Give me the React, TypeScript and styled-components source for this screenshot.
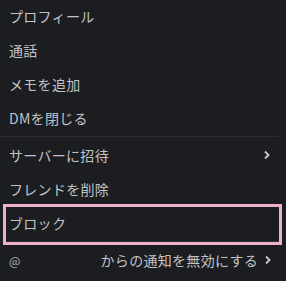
import styled, { createGlobalStyle } from "styled-components";

const Global = createGlobalStyle`
  html, body {
    margin: 0;
    padding: 0;
    background: #1c1d21;
  }
  body {
    font-family: "Noto Sans CJK JP", "Noto Sans", sans-serif;
  }
`;

const Menu = styled.div`
  width: 286px;
  height: 281px;
  overflow: hidden;
  background: #1c1d21;
  margin-top: -1px;
`;

const Item = styled.div<{ $marked?: boolean }>`
  position: relative;
  height: 34px;
  display: flex;
  align-items: center;
  justify-content: space-between;
  padding: 0 15px 0 9px;
  color: #c0c3c8;
  font-size: 14px;
  letter-spacing: 0.3px;

  ${(p) =>
    p.$marked &&
    `
    &::after {
      content: "";
      position: absolute;
      left: 3px;
      right: 4px;
      top: -2px;
      bottom: -5px;
      border: 3px solid #f0b0cb;
    }
  `}
`;

const Separator = styled.div`
  height: 1px;
  margin: 1px 7px 1px 0;
  background: #2c2e33;
`;

const At = styled.span`
  font-size: 12px;
  color: #aeb2b8;
`;

const Chevron = () => (
  <svg width="8" height="10" viewBox="0 0 8 10">
    <path d="M2 1.5 L5.5 5 L2 8.5" stroke="#c3c6cc" strokeWidth="1.9" fill="none" />
  </svg>
);

const Right = styled.span`
  display: flex;
  align-items: center;
  gap: 6px;
  margin-right: -1px;
`;

export default function App() {
  return (
    <>
      <Global />
      <Menu>
        <Item>プロフィール</Item>
        <Item>通話</Item>
        <Item>メモを追加</Item>
        <Item>DMを閉じる</Item>
        <Separator />
        <Item>
          サーバーに招待
          <Chevron />
        </Item>
        <Item>フレンドを削除</Item>
        <Item $marked>ブロック</Item>
        <Separator />
        <Item>
          <At>@</At>
          <Right>
            からの通知を無効にする
            <Chevron />
          </Right>
        </Item>
      </Menu>
    </>
  );
}
